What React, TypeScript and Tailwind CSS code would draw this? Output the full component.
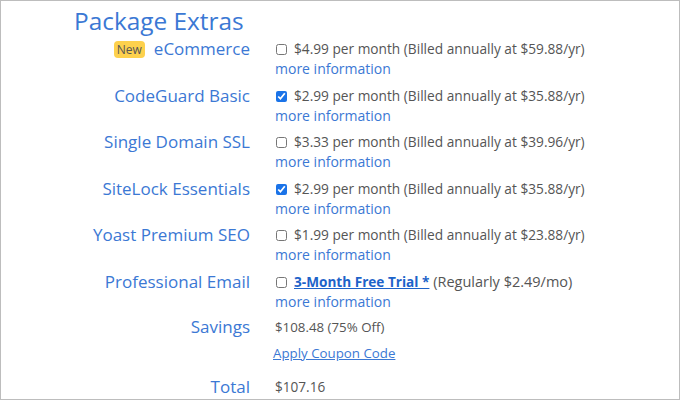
const extras = [
  { name: 'eCommerce', isNew: true, checked: false, price: '$4.99 per month (Billed annually at $59.88/yr)' },
  { name: 'CodeGuard Basic', checked: true, price: '$2.99 per month (Billed annually at $35.88/yr)' },
  { name: 'Single Domain SSL', checked: false, price: '$3.33 per month (Billed annually at $39.96/yr)' },
  { name: 'SiteLock Essentials', checked: true, price: '$2.99 per month (Billed annually at $35.88/yr)' },
  { name: 'Yoast Premium SEO', checked: false, price: '$1.99 per month (Billed annually at $23.88/yr)' },
];

function Check({ checked }: { checked: boolean }) {
  return (
    <input
      type="checkbox"
      defaultChecked={checked}
      className="w-[11px] h-[11px] m-0 ml-[1px] mr-[7px] align-[-1px] accent-[#1a73e8]"
    />
  );
}

function Label({ children }: { children: React.ReactNode }) {
  return (
    <div className="flex justify-end items-center gap-[9px] h-[20px] text-[17px] leading-[20px] text-[#3b78d4]">
      {children}
    </div>
  );
}

export default function App() {
  return (
    <div
      className="w-[680px] h-[400px] border border-[#bdbdbd] bg-white overflow-hidden"
      style={{ fontFamily: '"Open Sans", "Noto Sans", sans-serif' }}
    >
      <h1 className="pl-[73px] pt-[4px] text-[24.4px] leading-[32px] text-[#3b78d4]">Package Extras</h1>

      <div className="grid grid-cols-[249px_1fr] gap-x-[25px] mt-[2px] text-[14px] leading-[20px]">
        {extras.map((e) => (
          <div key={e.name} className="contents">
            <Label>
              {e.isNew && (
                <span className="bg-[#fdd14d] rounded-[4px] px-[3px] text-[12px] leading-[17px] text-[#555]">New</span>
              )}
              <span>{e.name}</span>
            </Label>
            <div className="mb-[6.6px]">
              <div className="h-[20px] text-[13.7px] text-[#555] whitespace-nowrap">
                <Check checked={e.checked} />
                {e.price}
              </div>
              <a className="block h-[20px] text-[#3b78d4]">more information</a>
            </div>
          </div>
        ))}

        <Label>Professional Email</Label>
        <div className="mb-[4.6px]">
          <div className="h-[20px] text-[14.5px] text-[#555] whitespace-nowrap">
            <Check checked={false} />
            <a className="text-[13.6px] font-bold underline text-[#1d63c9]">3-Month Free Trial *</a> (Regularly $2.49/mo)
          </div>
          <a className="block h-[20px] text-[#3b78d4]">more information</a>
        </div>

        <Label>Savings</Label>
        <div className="h-[20px] text-[13.3px] text-[#555]">$108.48 (75% Off)</div>

        <div />
        <div className="h-[20px] mt-[6px] ml-[-2px] text-[13.3px]">
          <a className="underline text-[#3b78d4]">Apply Coupon Code</a>
        </div>

        <div className="mt-[14px]">
          <Label>Total</Label>
        </div>
        <div className="h-[20px] mt-[14px] text-[13.6px] text-[#555]">$107.16</div>
      </div>
    </div>
  );
}
